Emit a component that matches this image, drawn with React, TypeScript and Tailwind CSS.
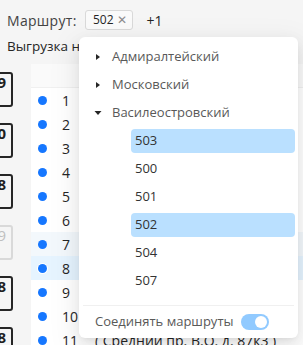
import { useState } from "react";

const boxes = [
    { n: "9", muted: false },
    { n: "0", muted: false },
    { n: "8", muted: false },
    { n: "9", muted: true },
    { n: "8", muted: false },
    { n: "8", muted: false },
];

const rows = [
    { n: 1, addr: "ул. Профессора Попова, 12" },
    { n: 2, addr: "" },
    { n: 3, addr: "" },
    { n: 4, addr: "" },
    { n: 5, addr: "" },
    { n: 6, addr: "наб. Лейтенанта Шмидта, 1е" },
    { n: 7, addr: "" },
    { n: 8, addr: "" },
    { n: 9, addr: "" },
    { n: 10, addr: "" },
    { n: 11, addr: "( Средний пр. В.О. д. 87к3 )" },
];

const districts = ["Адмиралтейский", "Московский"];
const routes = ["503", "500", "501", "502", "504", "507"];

const CaretRight = () => (
    <svg width="8" height="8" viewBox="0 0 8 8" className="shrink-0">
        <path d="M2 1 L6 4 L2 7 Z" fill="#262626" />
    </svg>
);

const CaretDown = () => (
    <svg width="8" height="8" viewBox="0 0 8 8" className="shrink-0">
        <path d="M0.5 2 L7.5 2 L4 6 Z" fill="#262626" />
    </svg>
);

const App = () => {
    const [selected, setSelected] = useState<string[]>(["503", "502"]);
    const [joined, setJoined] = useState(true);

    const toggleRoute = (r: string) => {
        setSelected((prev) =>
            prev.includes(r) ? prev.filter((x) => x !== r) : [...prev, r]
        );
    };

    return (
        <div
            className="relative w-[303px] h-[345px] overflow-hidden bg-[#f5f5f5] text-[14px] text-[#1f1f1f]"
            style={{ fontFamily: '"Open Sans", "Noto Sans", sans-serif' }}
        >
            <div className="flex items-center h-[20px] mt-[10px] pl-[7px]">
                <span className="text-[#434343] w-[78px] tracking-[0.3px]">Маршрут:</span>
                <span className="flex items-center h-[20px] pl-[7px] pr-[5px] border border-[#d9d9d9] rounded-[3px] bg-[#fafafa] text-[12px] text-[#262626]">
                    502
                    <span className="ml-[3px] text-[#8c8c8c] text-[12px]">✕</span>
                </span>
                <span className="ml-[14px] text-[#262626]">+1</span>
            </div>
            <div className="h-[20px] mt-[6px] pl-[7px] leading-[20px] text-[13.5px] text-[#262626] whitespace-nowrap">
                Выгрузка на карту маршрутов
            </div>

            <div className="flex mt-[8px]">
                <div className="flex flex-col gap-[16px] ml-[-21px] mt-[8px] w-[34px] shrink-0">
                    {boxes.map((b, i) => (
                        <div
                            key={i}
                            className={`h-[35px] rounded-[3px] border-2 text-right pr-[5px] leading-[16px] text-[15px] font-bold ${
                                b.muted
                                    ? "border-[#d9d9d9] text-[#bfbfbf] font-normal"
                                    : "border-[#262626] text-[#1f1f1f]"
                            }`}
                        >
                            {b.n}
                        </div>
                    ))}
                </div>
                <div className="ml-[18px] flex-1 bg-white">
                    <div className="h-[24px] bg-[#fafafa] border-b border-[#f0f0f0]" />
                    {rows.map((r) => (
                        <div
                            key={r.n}
                            className={`flex items-center h-[24px] whitespace-nowrap ${
                                r.n === 8
                                    ? "bg-[#e6f4ff]"
                                    : r.n === 7
                                    ? "bg-[#f3f8fc]"
                                    : "bg-white"
                            }`}
                        >
                            <span
                                className={`ml-[7px] w-[9px] h-[9px] rounded-full bg-[#1677ff] shrink-0 ${
                                    r.n === 8 ? "ring-1 ring-white" : ""
                                }`}
                            />
                            <span className="ml-[15px] w-[33px] text-[#262626] shrink-0">{r.n}</span>
                            <span className="text-[#262626]">{r.addr}</span>
                        </div>
                    ))}
                </div>
            </div>

            <div className="absolute left-[79px] top-[37px] w-[219px] h-[301px] bg-white rounded-[6px] shadow-[0_6px_16px_rgba(0,0,0,0.08),0_3px_6px_-4px_rgba(0,0,0,0.12),0_9px_28px_8px_rgba(0,0,0,0.05)] flex flex-col text-[13px]">
                <div className="pt-[6px] pl-[4px]">
                    {districts.map((d) => (
                        <div key={d} className="flex items-center h-[28px] text-[#595959]">
                            <span className="w-[29px] flex justify-center pl-[1px]">
                                <CaretRight />
                            </span>
                            <span>{d}</span>
                        </div>
                    ))}
                    <div className="flex items-center h-[28px] text-[#595959]">
                        <span className="w-[29px] flex justify-center pl-[1px]">
                            <CaretDown />
                        </span>
                        <span>Василеостровский</span>
                    </div>
                    {routes.map((r) => (
                        <div key={r} className="h-[28px] flex items-center pl-[48px] pr-[3px]">
                            <button
                                onClick={() => toggleRoute(r)}
                                className={`w-full h-[24px] text-left pl-[4px] rounded-[4px] text-[#333333] ${
                                    selected.includes(r) ? "bg-[#bae0ff]" : ""
                                }`}
                            >
                                {r}
                            </button>
                        </div>
                    ))}
                </div>
                <div className="mt-[10px] mx-[4px] border-t border-[#f0f0f0]" />
                <div className="flex items-center h-[32px] pl-[16px] text-[#595959]">
                    <span>Соединять маршруты</span>
                    <button
                        onClick={() => setJoined(!joined)}
                        className={`ml-[8px] w-[28px] h-[16px] rounded-full flex items-center px-[2px] ${
                            joined ? "bg-[#91caff] justify-end" : "bg-[#d9d9d9] justify-start"
                        }`}
                    >
                        <span className="w-[12px] h-[12px] rounded-full bg-white" />
                    </button>
                </div>
            </div>
        </div>
    );
};

export default App;
